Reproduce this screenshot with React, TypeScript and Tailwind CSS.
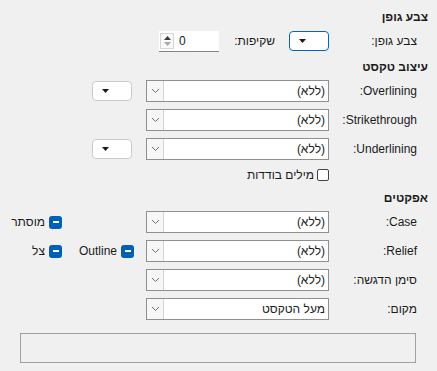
const rows = [
  { label: "Overlining:", value: "(ללא)", color: true },
  { label: "Strikethrough:", value: "(ללא)", color: false },
  { label: "Underlining:", value: "(ללא)", color: true },
];

function Chevron() {
  return (
    <svg width="9" height="6" viewBox="0 0 9 6" fill="none">
      <path d="M1 1l3.5 3.5L8 1" stroke="#707070" strokeWidth="1" />
    </svg>
  );
}

function Combo({ value }: { value: string }) {
  return (
    <div className="flex h-[22px] w-[183px] items-center border border-[#8f8f8f] bg-white">
      <span className="flex-1 pr-[3px] text-right">{value}</span>
      <span className="flex h-full w-[17px] items-center justify-center border-r border-[#d4d4d4] bg-[#f7f7f7]">
        <Chevron />
      </span>
    </div>
  );
}

function ColorButton({ active }: { active?: boolean }) {
  return (
    <div
      dir="ltr"
      className={
        "flex h-[20px] w-[40px] items-center rounded-[4px] border bg-white pl-[9px] " +
        (active ? "border-[#0067c0]" : "border-[#cccccc]")
      }
    >
      <svg width="7" height="4" viewBox="0 0 7 4">
        <path d="M0 0h7L3.5 4z" fill="#1b1b1b" />
      </svg>
    </div>
  );
}

function Mixed({ label }: { label: string }) {
  return (
    <div className="flex items-center gap-[4px]">
      <span className="flex h-[13px] w-[13px] items-center justify-center rounded-[3px] bg-[#005fb8]">
        <span className="h-[1.5px] w-[6px] bg-white" />
      </span>
      <span>{label}</span>
    </div>
  );
}

export default function App() {
  return (
    <div
      dir="rtl"
      className="flex h-[371px] w-[437px] flex-col bg-[#f0f0f0] pr-[9px] font-['Liberation_Sans',sans-serif] text-[12px] text-[#1b1b1b]"
    >
      <div className="mt-[8px] flex h-[18px] items-center font-bold">צבע גופן</div>

      <div className="mt-[5px] mr-[11px] flex h-[20px] items-center">
        <span className="w-[88px]">צבע גופן:</span>
        <ColorButton active />
        <span className="mr-[14px] w-[56px]">שקיפות:</span>
        <div dir="ltr" className="flex h-[21px] w-[60px] items-center border-b border-[#868686] bg-white">
          <div className="ml-[1px] flex h-[16px] w-[14px] flex-col items-center justify-center gap-[2px] border border-[#d6d6d6] bg-[#fafafa]">
            <svg width="7" height="4" viewBox="0 0 7 4">
              <path d="M0 4h7L3.5 0z" fill="#3a3a3a" />
            </svg>
            <svg width="7" height="4" viewBox="0 0 7 4">
              <path d="M0 0h7L3.5 4z" fill="#a8a8a8" />
            </svg>
          </div>
          <span className="ml-[5px]">0</span>
        </div>
      </div>

      <div className="mt-[7px] flex h-[18px] items-center font-bold">עיצוב טקסט</div>

      <div className="mt-[4px] mr-[11px] flex flex-col gap-[7px]">
        {rows.map((r) => (
          <div key={r.label} className="flex h-[22px] items-center">
            <span className="w-[88px]">{r.label}</span>
            <Combo value={r.value} />
            {r.color && (
              <div className="mr-[14px]">
                <ColorButton />
              </div>
            )}
          </div>
        ))}
      </div>

      <div className="mt-[8px] mr-[99px] flex h-[14px] items-center gap-[3px]">
        <span className="h-[12px] w-[12px] rounded-[2px] border border-[#444444] bg-white" />
        <span>מילים בודדות</span>
      </div>

      <div className="mt-[7px] flex h-[18px] items-center font-bold">אפקטים</div>

      <div className="mt-[4px] mr-[11px] flex flex-col gap-[7px]">
        <div className="flex h-[22px] items-center">
          <span className="w-[88px]">Case:</span>
          <Combo value="(ללא)" />
          <div className="mr-[12px] w-[72px]" />
          <Mixed label="מוסתר" />
        </div>
        <div className="flex h-[22px] items-center">
          <span className="w-[88px]">Relief:</span>
          <Combo value="(ללא)" />
          <div className="mr-[12px] w-[72px]">
            <Mixed label="Outline" />
          </div>
          <Mixed label="צל" />
        </div>
        <div className="flex h-[22px] items-center">
          <span className="w-[88px]">סימן הדגשה:</span>
          <Combo value="(ללא)" />
        </div>
        <div className="flex h-[22px] items-center">
          <span className="w-[88px]">מקום:</span>
          <Combo value="מעל הטקסט" />
        </div>
      </div>

      <div className="mt-[13px] mr-[12px] h-[30px] w-[396px] border border-[#a0a0a0]" />
    </div>
  );
}
